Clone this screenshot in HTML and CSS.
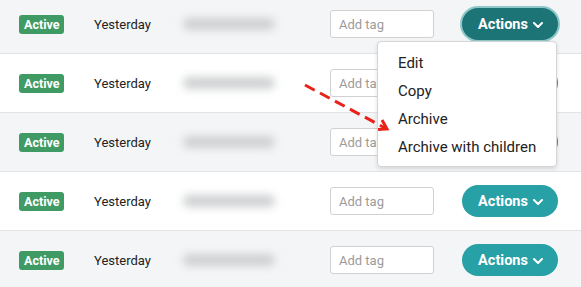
FILE: index.html
```html
<!DOCTYPE html>
<html>
<head>
<meta charset="utf-8">
<link rel="stylesheet" href="styles.css">
</head>
<body>
<div class="page">
  <div class="rows">
    <div class="row alt">
      <div class="cell"><span class="badge">Active</span></div>
      <div class="cell date">Yesterday</div>
      <div class="cell"><span class="blur"></span></div>
      <div class="cell"><input class="tag" type="text" placeholder="Add tag"></div>
      <div class="cell">
        <div class="btn-wrap">
          <button class="btn btn-open">Actions <svg class="chev" viewBox="0 0 10 6" width="10" height="6"><polyline points="1,1 5,5 9,1"/></svg></button>
          <div class="menu">
            <div class="item">Edit</div>
            <div class="item">Copy</div>
            <div class="item">Archive</div>
            <div class="item">Archive with children</div>
          </div>
        </div>
      </div>
    </div>
    <div class="row">
      <div class="cell"><span class="badge">Active</span></div>
      <div class="cell date">Yesterday</div>
      <div class="cell"><span class="blur"></span></div>
      <div class="cell"><input class="tag" type="text" placeholder="Add tag"></div>
      <div class="cell"><button class="btn">Actions <svg class="chev" viewBox="0 0 10 6" width="10" height="6"><polyline points="1,1 5,5 9,1"/></svg></button></div>
    </div>
    <div class="row alt">
      <div class="cell"><span class="badge">Active</span></div>
      <div class="cell date">Yesterday</div>
      <div class="cell"><span class="blur"></span></div>
      <div class="cell"><input class="tag" type="text" placeholder="Add tag"></div>
      <div class="cell"><button class="btn">Actions <svg class="chev" viewBox="0 0 10 6" width="10" height="6"><polyline points="1,1 5,5 9,1"/></svg></button></div>
    </div>
    <div class="row">
      <div class="cell"><span class="badge">Active</span></div>
      <div class="cell date">Yesterday</div>
      <div class="cell"><span class="blur"></span></div>
      <div class="cell"><input class="tag" type="text" placeholder="Add tag"></div>
      <div class="cell"><button class="btn">Actions <svg class="chev" viewBox="0 0 10 6" width="10" height="6"><polyline points="1,1 5,5 9,1"/></svg></button></div>
    </div>
    <div class="row alt">
      <div class="cell"><span class="badge">Active</span></div>
      <div class="cell date">Yesterday</div>
      <div class="cell"><span class="blur"></span></div>
      <div class="cell"><input class="tag" type="text" placeholder="Add tag"></div>
      <div class="cell"><button class="btn">Actions <svg class="chev" viewBox="0 0 10 6" width="10" height="6"><polyline points="1,1 5,5 9,1"/></svg></button></div>
    </div>
  </div>
  <svg class="arrow" viewBox="0 0 95 60" width="95" height="60">
    <line x1="5" y1="7" x2="86" y2="50.5" class="dash"/>
    <polyline points="78,51.5 87,51 82,42" class="head"/>
  </svg>
</div>
</body>
</html>
```

FILE: styles.css
```css
html, body {
  margin: 0;
  padding: 0;
  background: #ffffff;
  overflow: hidden;
}
body {
  font-family: Roboto, "Liberation Sans", sans-serif;
  color: #222;
}
.page {
  position: relative;
  width: 581px;
  height: 287px;
  overflow: hidden;
}
.rows {
  margin-top: -5px;
}
.row {
  display: grid;
  grid-template-columns: 75px 86px 150px 132px 1fr;
  align-items: center;
  height: 58px;
  padding-left: 19px;
  border-bottom: 1px solid #e2e3e5;
  background: #ffffff;
}
.row.alt {
  background: #f4f5f7;
}
.cell {
  display: flex;
  align-items: center;
}
.badge {
  display: inline-block;
  background: #3f9a64;
  color: #fff;
  font-weight: 700;
  font-size: 12.5px;
  line-height: 19px;
  height: 19px;
  padding: 0 5px;
  border-radius: 3px;
}
.date {
  font-size: 13px;
  color: #222;
}
.blur {
  display: block;
  width: 92px;
  height: 12px;
  margin-left: 3px;
  background: #cdd0d1;
  border-radius: 6px;
  filter: blur(4px);
}
.tag {
  box-sizing: border-box;
  width: 104px;
  height: 28px;
  border: 1px solid #cfd1d3;
  border-radius: 3px;
  background: #fff;
  padding: 0 8px;
  font-family: Roboto, "Liberation Sans", sans-serif;
  font-size: 13px;
  outline: none;
}
.tag::placeholder {
  color: #9b9b9b;
}
.btn-wrap {
  position: relative;
}
.btn {
  display: flex;
  align-items: center;
  justify-content: center;
  gap: 5px;
  width: 96px;
  height: 32px;
  border: none;
  border-radius: 16px;
  background: #27a0a6;
  color: #fff;
  font-family: Roboto, "Liberation Sans", sans-serif;
  font-weight: 700;
  font-size: 14.5px;
  padding: 0 0 0 1px;
  cursor: pointer;
}
.btn-open {
  background: #1d7476;
  box-shadow: 0 0 0 2px #8ec7c7;
}
.chev {
  display: block;
  fill: none;
  stroke: #fff;
  stroke-width: 2;
  stroke-linecap: round;
  stroke-linejoin: round;
  margin-top: 1px;
}
.menu {
  position: absolute;
  top: 33px;
  right: 1px;
  width: 180px;
  box-sizing: border-box;
  background: #fff;
  border: 1px solid #d3d5d7;
  border-radius: 4px;
  box-shadow: 0 2px 4px rgba(0,0,0,0.12);
  padding: 7px 0 5px;
  z-index: 5;
}
.item {
  height: 28px;
  line-height: 28px;
  padding-left: 20px;
  font-size: 15px;
  color: #222;
  white-space: nowrap;
}
.arrow {
  position: absolute;
  left: 300px;
  top: 78px;
  z-index: 6;
}
.arrow .dash {
  stroke: #e8221b;
  stroke-width: 3;
  stroke-dasharray: 11 6;
}
.arrow .head {
  fill: none;
  stroke: #e8221b;
  stroke-width: 3;
  stroke-linejoin: miter;
}
```
